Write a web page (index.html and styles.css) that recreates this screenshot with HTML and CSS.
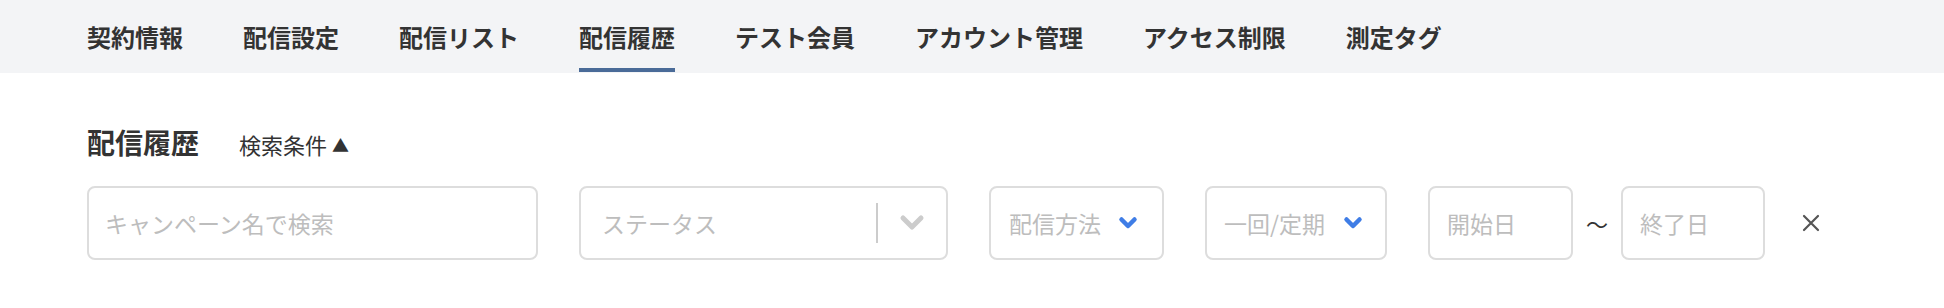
FILE: index.html
```html
<!DOCTYPE html>
<html lang="ja">
<head>
<meta charset="utf-8">
<title>配信履歴</title>
<link rel="stylesheet" href="styles.css">
</head>
<body>
<nav class="tabs">
  <a class="tab">契約情報</a>
  <a class="tab">配信設定</a>
  <a class="tab">配信リスト</a>
  <a class="tab active">配信履歴</a>
  <a class="tab">テスト会員</a>
  <a class="tab">アカウント管理</a>
  <a class="tab">アクセス制限</a>
  <a class="tab">測定タグ</a>
</nav>
<main class="content">
  <div class="head-row">
    <h1 class="title">配信履歴</h1>
    <span class="toggle">検索条件 <span class="tri">▲</span></span>
  </div>
  <div class="filters">
    <div class="field search"><span class="ph">キャンペーン名で検索</span></div>
    <div class="field status">
      <span class="ph">ステータス</span>
      <span class="indicators">
        <span class="sep"></span>
        <svg class="chev-gray" width="28" height="18" viewBox="0 0 28 18"><path d="M5 4 L14 13 L23 4" fill="none" stroke="#cccccc" stroke-width="5" stroke-linecap="round" stroke-linejoin="round"/></svg>
      </span>
    </div>
    <div class="field method">
      <span class="ph">配信方法</span>
      <svg class="chev-blue" width="20" height="14" viewBox="0 0 20 14"><path d="M3.5 3.5 L10 10 L16.5 3.5" fill="none" stroke="#3f7de6" stroke-width="4.5" stroke-linecap="round" stroke-linejoin="round"/></svg>
    </div>
    <div class="field freq">
      <span class="ph">一回/定期</span>
      <svg class="chev-blue" width="20" height="14" viewBox="0 0 20 14"><path d="M3.5 3.5 L10 10 L16.5 3.5" fill="none" stroke="#3f7de6" stroke-width="4.5" stroke-linecap="round" stroke-linejoin="round"/></svg>
    </div>
    <div class="date-range">
      <div class="field date start"><span class="ph">開始日</span></div>
      <span class="tilde">〜</span>
      <div class="field date end"><span class="ph">終了日</span></div>
    </div>
    <button class="clear" type="button" aria-label="clear">
      <svg width="20" height="20" viewBox="0 0 20 20"><path d="M3 3 L17 17 M17 3 L3 17" stroke="#555555" stroke-width="2.2" stroke-linecap="round"/></svg>
    </button>
  </div>
</main>
</body>
</html>
```

FILE: styles.css
```css
* { box-sizing: border-box; }

html, body {
  margin: 0;
  padding: 0;
  background: #ffffff;
}

body {
  font-family: "Noto Sans CJK JP", "Noto Sans", sans-serif;
  color: #333333;
  width: 1944px;
  height: 308px;
  overflow: hidden;
}

.tabs {
  display: flex;
  gap: 60px;
  height: 73px;
  padding-left: 87px;
  background: #f3f4f6;
}

.tab {
  position: relative;
  display: flex;
  align-items: center;
  height: 73px;
  font-size: 24px;
  font-weight: 700;
  color: #333333;
  line-height: 1;
}

.tab.active::after {
  content: "";
  position: absolute;
  left: 0;
  right: 0;
  bottom: 1px;
  height: 4px;
  background: #4a6b98;
}

.content {
  padding-left: 87px;
}

.head-row {
  display: flex;
  align-items: center;
  gap: 40px;
  height: 42px;
  margin-top: 48px;
}

.title {
  margin: 0;
  font-size: 28px;
  font-weight: 700;
  line-height: 42px;
  color: #333333;
}

.toggle {
  font-size: 22px;
  color: #333333;
  padding-top: 4px;
}

.tri {
  font-size: 17px;
  position: relative;
  top: -2px;
}

.filters {
  display: flex;
  align-items: center;
  gap: 41px;
  margin-top: 23px;
}

.field {
  display: flex;
  align-items: center;
  height: 74px;
  border: 2px solid #dddddd;
  border-radius: 8px;
  padding-left: 16px;
  background: #ffffff;
}

.ph {
  font-size: 23px;
  color: #bdbdbd;
  white-space: nowrap;
}

.search { width: 451px; }

.status {
  width: 369px;
  justify-content: space-between;
  padding-left: 21px;
  padding-right: 20px;
}

.indicators {
  display: flex;
  align-items: center;
  gap: 20px;
}

.sep {
  display: block;
  width: 2px;
  height: 40px;
  background: #cccccc;
}

.method {
  width: 175px;
  gap: 17px;
  padding-left: 18px;
}

.freq {
  width: 182px;
  gap: 18px;
  padding-left: 17px;
}

.date-range {
  display: flex;
  align-items: center;
  gap: 13px;
}

.date { padding-left: 17px; }
.start { width: 145px; }
.end { width: 144px; }

.tilde {
  font-size: 22px;
  color: #333333;
}

.clear {
  display: flex;
  align-items: center;
  justify-content: center;
  background: none;
  border: none;
  padding: 0;
  margin-left: -10px;
  width: 30px;
  height: 30px;
}
```
